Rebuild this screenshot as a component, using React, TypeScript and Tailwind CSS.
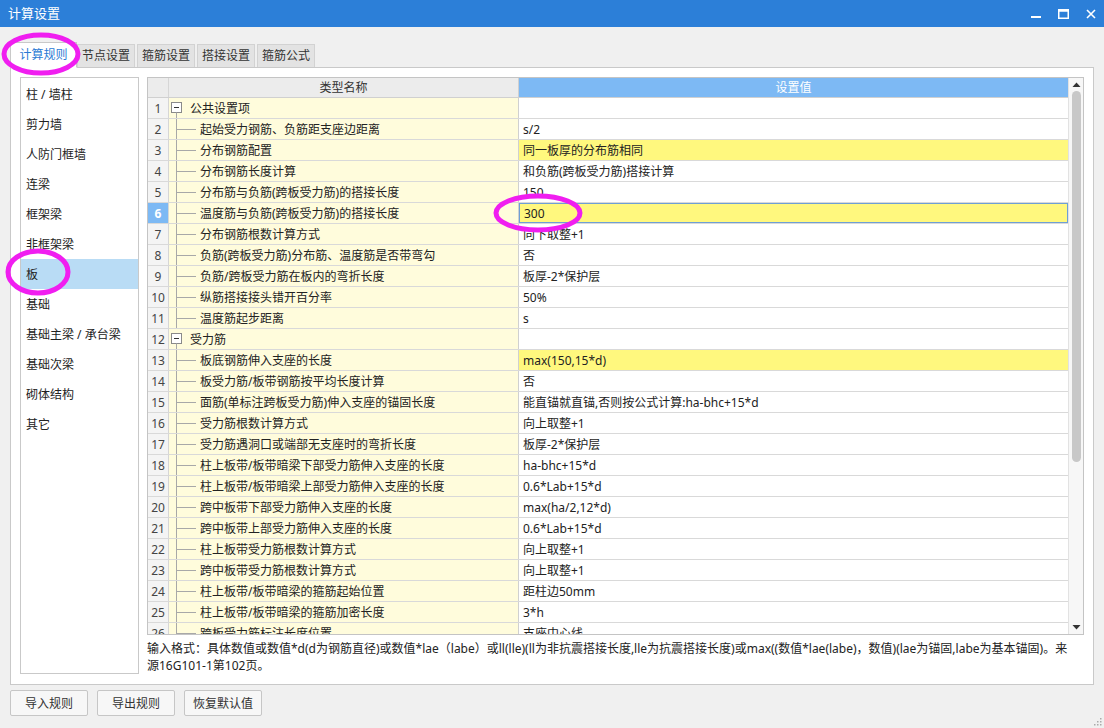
import React from "react";

type Row = { name: string; value?: string; group?: boolean; hl?: boolean };

const rows: Row[] = [
  { name: "公共设置项", group: true },
  { name: "起始受力钢筋、负筋距支座边距离", value: "s/2" },
  { name: "分布钢筋配置", value: "同一板厚的分布筋相同", hl: true },
  { name: "分布钢筋长度计算", value: "和负筋(跨板受力筋)搭接计算" },
  { name: "分布筋与负筋(跨板受力筋)的搭接长度", value: "150" },
  { name: "温度筋与负筋(跨板受力筋)的搭接长度", value: "300", hl: true },
  { name: "分布钢筋根数计算方式", value: "向下取整+1" },
  { name: "负筋(跨板受力筋)分布筋、温度筋是否带弯勾", value: "否" },
  { name: "负筋/跨板受力筋在板内的弯折长度", value: "板厚-2*保护层" },
  { name: "纵筋搭接接头错开百分率", value: "50%" },
  { name: "温度筋起步距离", value: "s" },
  { name: "受力筋", group: true },
  { name: "板底钢筋伸入支座的长度", value: "max(150,15*d)", hl: true },
  { name: "板受力筋/板带钢筋按平均长度计算", value: "否" },
  { name: "面筋(单标注跨板受力筋)伸入支座的锚固长度", value: "能直锚就直锚,否则按公式计算:ha-bhc+15*d" },
  { name: "受力筋根数计算方式", value: "向上取整+1" },
  { name: "受力筋遇洞口或端部无支座时的弯折长度", value: "板厚-2*保护层" },
  { name: "柱上板带/板带暗梁下部受力筋伸入支座的长度", value: "ha-bhc+15*d" },
  { name: "柱上板带/板带暗梁上部受力筋伸入支座的长度", value: "0.6*Lab+15*d" },
  { name: "跨中板带下部受力筋伸入支座的长度", value: "max(ha/2,12*d)" },
  { name: "跨中板带上部受力筋伸入支座的长度", value: "0.6*Lab+15*d" },
  { name: "柱上板带受力筋根数计算方式", value: "向上取整+1" },
  { name: "跨中板带受力筋根数计算方式", value: "向上取整+1" },
  { name: "柱上板带/板带暗梁的箍筋起始位置", value: "距柱边50mm" },
  { name: "柱上板带/板带暗梁的箍筋加密长度", value: "3*h" },
  { name: "跨板受力筋标注长度位置", value: "支座中心线" },
];

const sideItems = [
  "柱 / 墙柱",
  "剪力墙",
  "人防门框墙",
  "连梁",
  "框架梁",
  "非框架梁",
  "板",
  "基础",
  "基础主梁 / 承台梁",
  "基础次梁",
  "砌体结构",
  "其它",
];

const tabs = ["计算规则", "节点设置", "箍筋设置", "搭接设置", "箍筋公式"];

const SELECTED_ROW = 6;

const TreeGlyph = ({ group }: { group?: boolean }) =>
  group ? (
    <svg width="21" height="20" className="shrink-0">
      <rect x="2.5" y="4.5" width="10" height="10" fill="#fff" stroke="#8a8a8a" />
      <line x1="5" y1="9.5" x2="10" y2="9.5" stroke="#333" />
      <line x1="7.5" y1="14.5" x2="7.5" y2="20" stroke="#a8a8a8" />
    </svg>
  ) : (
    <svg width="31" height="20" className="shrink-0">
      <line x1="7.5" y1="0" x2="7.5" y2="20" stroke="#a8a8a8" />
      <line x1="7.5" y1="10.5" x2="27" y2="10.5" stroke="#a8a8a8" />
    </svg>
  );

export default function App() {
  return (
    <div
      className="relative w-[1104px] h-[728px] overflow-hidden bg-[#f0f0f0] flex flex-col text-[12px] text-[#222]"
      style={{ fontFamily: '"Noto Sans", "Noto Sans CJK SC", sans-serif' }}
    >
      {/* title bar */}
      <div className="h-[27px] bg-[#2c7fd8] flex items-center justify-between pl-[8px] pr-[8px] text-white shrink-0">
        <span className="text-[13px]">计算设置</span>
        <div className="flex items-center gap-[17px]">
          <svg width="10" height="10" viewBox="0 0 10 10">
            <rect x="0" y="7" width="10" height="2" fill="#fff" />
          </svg>
          <svg width="11" height="10" viewBox="0 0 11 10">
            <rect x="0.75" y="0.75" width="9.5" height="8.5" fill="none" stroke="#fff" strokeWidth="1.5" />
            <rect x="0.75" y="0.75" width="9.5" height="2" fill="#fff" />
          </svg>
          <svg width="10" height="10" viewBox="0 0 10 10">
            <path d="M1 1 L9 9 M9 1 L1 9" stroke="#fff" strokeWidth="1.6" />
          </svg>
        </div>
      </div>

      {/* tabs */}
      <div className="h-[40px] pl-[10px] flex items-end shrink-0 relative z-10">
        {tabs.map((t, i) =>
          i === 0 ? (
            <div
              key={t}
              className="h-[26px] w-[67px] -mb-px bg-white border border-[#c9c9c9] border-b-white flex items-center justify-center text-[#2a7ad4]"
            >
              {t}
            </div>
          ) : (
            <div
              key={t}
              className="h-[23px] w-[58px] mr-[2px] bg-[#e3e3e3] border border-[#d2d2d2] border-b-0 flex items-center justify-center text-[#333]"
            >
              {t}
            </div>
          )
        )}
      </div>

      {/* panel */}
      <div className="mx-[10px] h-[618px] bg-white border border-[#c9c9c9] pt-[9px] pl-[9px] pr-[9px] flex gap-[8px] shrink-0">
        <div className="w-[119px] h-[597px] border border-[#c9c9c9] pt-[1px]">
          {sideItems.map((s, i) => (
            <div
              key={s}
              className={`h-[30px] flex items-center pl-[5px] pt-[2px] ${i === 6 ? "bg-[#b9dcf5]" : ""}`}
            >
              {s}
            </div>
          ))}
        </div>

        <div className="flex-1 flex flex-col">
          {/* grid */}
          <div className="h-[558px] border border-[#c4c4c4] flex overflow-hidden">
            <div className="flex-1 flex flex-col">
              <div className="h-[20px] flex shrink-0 border-b border-[#d0d0d0]">
                <div className="w-[21px] bg-[#ececec] border-r border-[#d6d6d6]" />
                <div className="w-[350px] bg-[#ececec] border-r border-[#d0d0d0] flex items-center justify-center pt-[1px] text-[#333]">
                  类型名称
                </div>
                <div className="flex-1 bg-[#7db9f4] flex items-center justify-center pt-[1px] text-white">设置值</div>
              </div>
              <div className="flex-1 overflow-hidden">
                {rows.map((r, i) => {
                  const n = i + 1;
                  const sel = n === SELECTED_ROW;
                  return (
                    <div key={n} className="h-[21px] flex border-b border-[#d9d9d9]">
                      <div
                        className={`w-[21px] border-r border-[#d6d6d6] flex items-center justify-center pt-[2px] ${
                          sel ? "bg-[#7db9f4] text-white font-bold" : "bg-[#f4f4f4] text-[#444]"
                        }`}
                      >
                        {n}
                      </div>
                      <div className="w-[350px] bg-[#fffcdc] border-r border-[#d0d0d0] flex items-center">
                        <TreeGlyph group={r.group} />
                        <span className="whitespace-nowrap pt-[2px]">{r.name}</span>
                      </div>
                      <div
                        className={`flex-1 flex items-center pl-[4px] pt-[2px] whitespace-nowrap ${
                          r.hl ? "bg-[#fff87e]" : "bg-white"
                        } ${sel ? "border border-[#6e9fd6]" : ""}`}
                      >
                        {r.value ?? ""}
                      </div>
                    </div>
                  );
                })}
              </div>
            </div>
            {/* scrollbar */}
            <div className="w-[15px] bg-[#f7f7f7] border-l border-[#e2e2e2] flex flex-col items-center">
              <svg width="9" height="12" viewBox="0 0 9 12" className="mt-[1px] shrink-0">
                <path d="M0.5 8 L4.5 3.5 L8.5 8 Z" fill="#333" />
              </svg>
              <div className="w-[9px] h-[371px] rounded-full bg-[#c8c8c8]" />
              <div className="flex-1" />
              <svg width="9" height="12" viewBox="0 0 9 12" className="mb-[1px] shrink-0">
                <path d="M0.5 4 L4.5 8.5 L8.5 4 Z" fill="#333" />
              </svg>
            </div>
          </div>
          <p className="mt-[5px] leading-[17px] whitespace-nowrap text-[#222]">
            输入格式：具体数值或数值*d(d为钢筋直径)或数值*lae（labe）或ll(lle)(ll为非抗震搭接长度,lle为抗震搭接长度)或max((数值*lae(labe)，数值)(lae为锚固,labe为基本锚固)。来
            <br />
            源16G101-1第102页。
          </p>
        </div>
      </div>

      {/* buttons */}
      <div className="flex gap-[9px] pl-[10px] mt-[5px]">
        {["导入规则", "导出规则", "恢复默认值"].map((b) => (
          <div
            key={b}
            className="h-[26px] w-[78px] bg-[#f7f7f7] border border-[#c6c6c6] rounded-[2px] flex items-center justify-center pt-[1px] text-[#333]"
          >
            {b}
          </div>
        ))}
      </div>

      {/* resize grip */}
      <svg width="8" height="8" viewBox="0 0 8 8" className="absolute right-[2px] bottom-[2px]">
        <rect x="6" y="0" width="1.5" height="1.5" fill="#aaa" />
        <rect x="3" y="3" width="1.5" height="1.5" fill="#aaa" />
        <rect x="6" y="3" width="1.5" height="1.5" fill="#aaa" />
        <rect x="0" y="6" width="1.5" height="1.5" fill="#aaa" />
        <rect x="3" y="6" width="1.5" height="1.5" fill="#aaa" />
        <rect x="6" y="6" width="1.5" height="1.5" fill="#aaa" />
      </svg>

      {/* magenta annotation marks */}
      <svg className="absolute inset-0 pointer-events-none z-20" width="1104" height="728">
        <ellipse cx="41" cy="54" rx="37" ry="19" fill="none" stroke="#f01ef0" strokeWidth="5" />
        <ellipse cx="38" cy="272" rx="30" ry="21" fill="none" stroke="#f01ef0" strokeWidth="5" />
        <ellipse cx="538" cy="213" rx="42" ry="17" fill="none" stroke="#f01ef0" strokeWidth="5" />
      </svg>
    </div>
  );
}
